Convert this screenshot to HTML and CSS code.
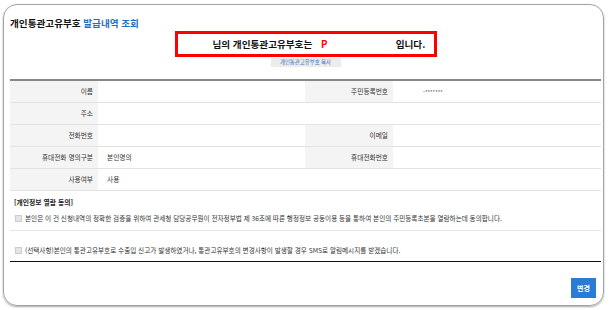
FILE: index.html
```html
<!DOCTYPE html>
<html lang="ko">
<head>
    <meta charset="UTF-8">
    <meta name="viewport" content="width=device-width, initial-scale=1.0">
    <title>개인통관고유부호 발급내역 조회</title>
    <link rel="stylesheet" href="styles.css">
</head>
<body>
    <div class="card">
        <h1 class="page-title">개인통관고유부호 <span class="accent">발급내역 조회</span></h1>

        <div class="result">
            <div class="result-box">
                <span>님의 개인통관고유부호는</span>
                <span class="code">P</span>
                <span>입니다.</span>
            </div>
            <button class="copy-btn" type="button">개인통관고유부호 복사</button>
        </div>

        <div class="info-grid">
            <div class="label">이름</div>
            <div class="value"></div>
            <div class="label">주민등록번호</div>
            <div class="value"><span class="masked">-*******</span></div>

            <div class="label">주소</div>
            <div class="value wide"></div>

            <div class="label">전화번호</div>
            <div class="value"></div>
            <div class="label">이메일</div>
            <div class="value"></div>

            <div class="label">휴대전화 명의구분</div>
            <div class="value">본인명의</div>
            <div class="label">휴대전화번호</div>
            <div class="value"></div>

            <div class="label">사용여부</div>
            <div class="value wide">사용</div>
        </div>

        <div class="agree">
            <div class="agree-title">[개인정보 열람 동의]</div>
            <label class="agree-row">
                <span class="check"></span>본인은 이 건 신청내역의 정확한 검증을 위하여 관세청 담당공무원이 전자정부법 제 36조에 따른 행정정보 공동이용 등을 통하여 본인의 주민등록초본을 열람하는데 동의합니다.
            </label>
            <label class="agree-row last">
                <span class="check"></span>(선택사항)본인의 통관고유부호로 수출입 신고가 발생하였거나, 통관고유부호의 변경사항이 발생할 경우 SMS로 알림메시지를 받겠습니다.
            </label>
        </div>

        <div class="actions">
            <button class="btn-primary" type="button">변경</button>
        </div>
    </div>
</body>
</html>
```

FILE: styles.css
```css
body {
    margin: 0;
    padding: 4px 6px 4px 3px;
    font-family: "Noto Sans CJK KR", "Noto Sans", sans-serif;
    color: #333;
    background: #fff;
}

.card {
    height: 302px;
    box-sizing: border-box;
    border: 1px solid #a3a3a3;
    border-radius: 14px;
    box-shadow: 0 1px 2px rgba(0, 0, 0, 0.35);
    padding: 11px 2px 0 6px;
}

.page-title {
    margin: 0;
    font-size: 9.6px;
    line-height: 14px;
    font-weight: bold;
    color: #111;
}

.page-title .accent {
    color: #1d6fc6;
}

.result {
    margin-top: 1px;
}

.result-box {
    width: 262px;
    height: 26px;
    box-sizing: border-box;
    margin: 0 auto;
    border: 3px solid #f00;
    padding-left: 35px;
    font-size: 9.6px;
    line-height: 20px;
    font-weight: bold;
    color: #111;
    white-space: nowrap;
}

.result-box .code {
    display: inline-block;
    width: 72px;
    margin-left: 6px;
    color: #f00;
}

.copy-btn {
    display: block;
    width: 70px;
    height: 9px;
    margin: 1px auto 0;
    padding: 0;
    border: none;
    background: #ececec;
    color: #3b6fbf;
    font-family: inherit;
    font-size: 5.4px;
    line-height: 9px;
}

.info-grid {
    display: grid;
    grid-template-columns: 88px 207px 88px 1fr;
    margin-top: 12px;
    border-top: 2px solid #878787;
    font-size: 6.7px;
}

.info-grid > div {
    height: 21px;
    line-height: 21px;
    border-bottom: 1px solid #e2e2e2;
}

.label {
    background: #f4f4f4;
    text-align: right;
    padding-right: 5px;
}

.value {
    padding-left: 9px;
}

.value.wide {
    grid-column: span 3;
}

.masked {
    margin-left: 21px;
    font-size: 5.5px;
}

.agree {
    margin-top: 6px;
    font-size: 6.6px;
}

.agree-title {
    padding-left: 4px;
    line-height: 10px;
    font-size: 6.8px;
    font-weight: bold;
    color: #222;
}

.agree-row {
    display: flex;
    align-items: center;
    padding: 6px 0 7px 5px;
    line-height: 10px;
    border-bottom: 1px solid #e6e6e6;
    white-space: nowrap;
}

.agree-row.last {
    padding: 14px 0 6px 5px;
    border-bottom-color: #111;
}

.check {
    width: 5px;
    height: 5px;
    margin-right: 3px;
    border: 0.5px solid #cfcfcf;
    background: #e4e4e4;
    flex-shrink: 0;
}

.actions {
    display: flex;
    justify-content: flex-end;
    margin-top: 16px;
    padding-right: 5px;
}

.btn-primary {
    width: 25px;
    height: 20px;
    padding: 0;
    border: none;
    background: #2a7bd5;
    color: #fff;
    font-family: inherit;
    font-size: 7px;
    font-weight: bold;
}
```
